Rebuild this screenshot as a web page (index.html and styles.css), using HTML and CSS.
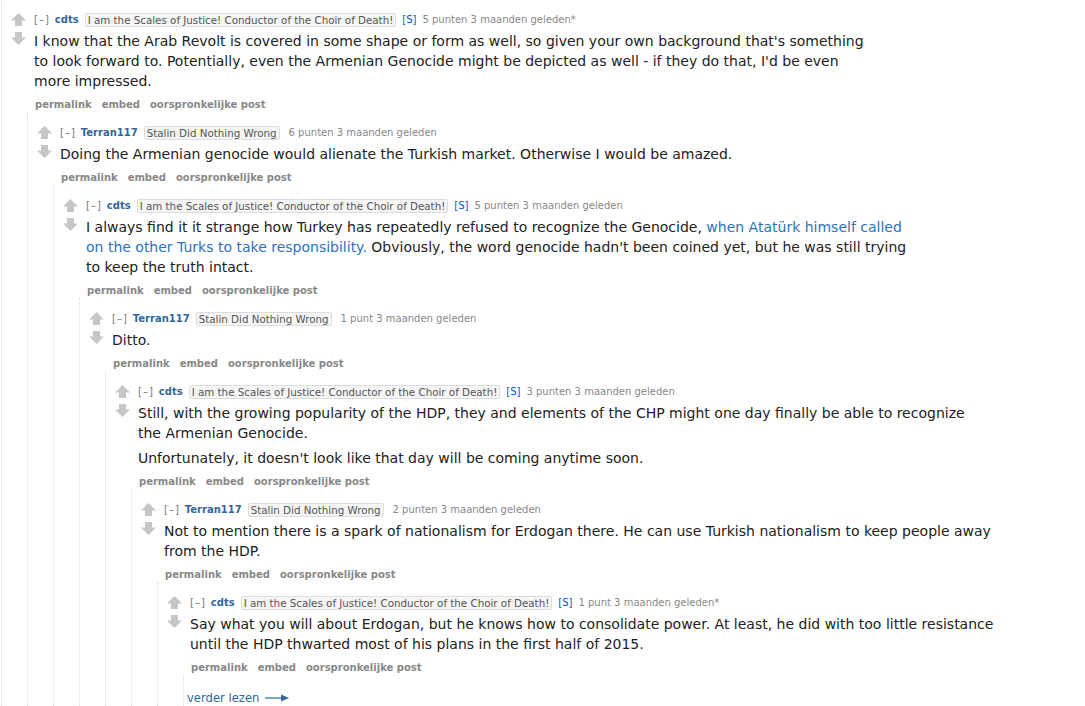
FILE: index.html
```html
<!DOCTYPE html>
<html lang="nl">
<head>
<meta charset="utf-8">
<title>Reacties</title>
<link rel="stylesheet" href="styles.css">
</head>
<body>
<div class="thread">
  <div class="comment">
    <div class="midcol">
      <svg class="arrow" viewBox="0 0 15 14"><path d="M7.5 0 L15 7.5 L11 7.5 L11 13 L4 13 L4 7.5 L0 7.5 Z"/></svg>
      <svg class="arrow" viewBox="0 0 15 14"><path d="M7.5 14 L15 6.5 L11 6.5 L11 1 L4 1 L4 6.5 L0 6.5 Z"/></svg>
    </div>
    <div class="entry">
      <p class="tagline"><span class="expand">[–]</span><span class="author">cdts</span><span class="flair">I am the Scales of Justice! Conductor of the Choir of Death!</span><span class="submitter">[S]</span><span class="meta">5 punten 3 maanden geleden*</span></p>
      <div class="md"><p>I know that the Arab Revolt is covered in some shape or form as well, so given your own background that's something to look forward to. Potentially, even the Armenian Genocide might be depicted as well - if they do that, I'd be even more impressed.</p></div>
      <ul class="flat-list"><li>permalink</li><li>embed</li><li>oorspronkelijke post</li></ul>

      <div class="child">
        <div class="comment">
          <div class="midcol">
            <svg class="arrow" viewBox="0 0 15 14"><path d="M7.5 0 L15 7.5 L11 7.5 L11 13 L4 13 L4 7.5 L0 7.5 Z"/></svg>
            <svg class="arrow" viewBox="0 0 15 14"><path d="M7.5 14 L15 6.5 L11 6.5 L11 1 L4 1 L4 6.5 L0 6.5 Z"/></svg>
          </div>
          <div class="entry">
            <p class="tagline"><span class="expand">[–]</span><span class="author">Terran117</span><span class="flair">Stalin Did Nothing Wrong</span><span class="meta wide">6 punten 3 maanden geleden</span></p>
            <div class="md"><p>Doing the Armenian genocide would alienate the Turkish market. Otherwise I would be amazed.</p></div>
            <ul class="flat-list"><li>permalink</li><li>embed</li><li>oorspronkelijke post</li></ul>

            <div class="child">
              <div class="comment">
                <div class="midcol">
                  <svg class="arrow" viewBox="0 0 15 14"><path d="M7.5 0 L15 7.5 L11 7.5 L11 13 L4 13 L4 7.5 L0 7.5 Z"/></svg>
                  <svg class="arrow" viewBox="0 0 15 14"><path d="M7.5 14 L15 6.5 L11 6.5 L11 1 L4 1 L4 6.5 L0 6.5 Z"/></svg>
                </div>
                <div class="entry">
                  <p class="tagline"><span class="expand">[–]</span><span class="author">cdts</span><span class="flair">I am the Scales of Justice! Conductor of the Choir of Death!</span><span class="submitter">[S]</span><span class="meta">5 punten 3 maanden geleden</span></p>
                  <div class="md"><p>I always find it it strange how Turkey has repeatedly refused to recognize the Genocide, <a href="#">when Atatürk himself called on the other Turks to take responsibility.</a> Obviously, the word genocide hadn't been coined yet, but he was still trying to keep the truth intact.</p></div>
                  <ul class="flat-list"><li>permalink</li><li>embed</li><li>oorspronkelijke post</li></ul>

                  <div class="child">
                    <div class="comment">
                      <div class="midcol">
                        <svg class="arrow" viewBox="0 0 15 14"><path d="M7.5 0 L15 7.5 L11 7.5 L11 13 L4 13 L4 7.5 L0 7.5 Z"/></svg>
                        <svg class="arrow" viewBox="0 0 15 14"><path d="M7.5 14 L15 6.5 L11 6.5 L11 1 L4 1 L4 6.5 L0 6.5 Z"/></svg>
                      </div>
                      <div class="entry">
                        <p class="tagline"><span class="expand">[–]</span><span class="author">Terran117</span><span class="flair">Stalin Did Nothing Wrong</span><span class="meta wide">1 punt 3 maanden geleden</span></p>
                        <div class="md"><p>Ditto.</p></div>
                        <ul class="flat-list"><li>permalink</li><li>embed</li><li>oorspronkelijke post</li></ul>

                        <div class="child">
                          <div class="comment">
                            <div class="midcol">
                              <svg class="arrow" viewBox="0 0 15 14"><path d="M7.5 0 L15 7.5 L11 7.5 L11 13 L4 13 L4 7.5 L0 7.5 Z"/></svg>
                              <svg class="arrow" viewBox="0 0 15 14"><path d="M7.5 14 L15 6.5 L11 6.5 L11 1 L4 1 L4 6.5 L0 6.5 Z"/></svg>
                            </div>
                            <div class="entry">
                              <p class="tagline"><span class="expand">[–]</span><span class="author">cdts</span><span class="flair">I am the Scales of Justice! Conductor of the Choir of Death!</span><span class="submitter">[S]</span><span class="meta">3 punten 3 maanden geleden</span></p>
                              <div class="md"><p>Still, with the growing popularity of the HDP, they and elements of the CHP might one day finally be able to recognize the Armenian Genocide.</p><p>Unfortunately, it doesn't look like that day will be coming anytime soon.</p></div>
                              <ul class="flat-list"><li>permalink</li><li>embed</li><li>oorspronkelijke post</li></ul>

                              <div class="child">
                                <div class="comment">
                                  <div class="midcol">
                                    <svg class="arrow" viewBox="0 0 15 14"><path d="M7.5 0 L15 7.5 L11 7.5 L11 13 L4 13 L4 7.5 L0 7.5 Z"/></svg>
                                    <svg class="arrow" viewBox="0 0 15 14"><path d="M7.5 14 L15 6.5 L11 6.5 L11 1 L4 1 L4 6.5 L0 6.5 Z"/></svg>
                                  </div>
                                  <div class="entry">
                                    <p class="tagline"><span class="expand">[–]</span><span class="author">Terran117</span><span class="flair">Stalin Did Nothing Wrong</span><span class="meta wide">2 punten 3 maanden geleden</span></p>
                                    <div class="md"><p>Not to mention there is a spark of nationalism for Erdogan there. He can use Turkish nationalism to keep people away from the HDP.</p></div>
                                    <ul class="flat-list"><li>permalink</li><li>embed</li><li>oorspronkelijke post</li></ul>

                                    <div class="child">
                                      <div class="comment">
                                        <div class="midcol">
                                          <svg class="arrow" viewBox="0 0 15 14"><path d="M7.5 0 L15 7.5 L11 7.5 L11 13 L4 13 L4 7.5 L0 7.5 Z"/></svg>
                                          <svg class="arrow" viewBox="0 0 15 14"><path d="M7.5 14 L15 6.5 L11 6.5 L11 1 L4 1 L4 6.5 L0 6.5 Z"/></svg>
                                        </div>
                                        <div class="entry">
                                          <p class="tagline"><span class="expand">[–]</span><span class="author">cdts</span><span class="flair">I am the Scales of Justice! Conductor of the Choir of Death!</span><span class="submitter">[S]</span><span class="meta">1 punt 3 maanden geleden*</span></p>
                                          <div class="md"><p>Say what you will about Erdogan, but he knows how to consolidate power. At least, he did with too little resistance until the HDP thwarted most of his plans in the first half of 2015.</p></div>
                                          <ul class="flat-list"><li>permalink</li><li>embed</li><li>oorspronkelijke post</li></ul>

                                          <div class="child">
                                            <div class="more">verder lezen <svg class="more-arrow" viewBox="0 0 24 8"><path d="M0 4 H17" stroke="currentColor" stroke-width="1.2"/><path d="M16 0.5 L24 4 L16 7.5 Z" fill="currentColor"/></svg></div>
                                          </div>
                                        </div>
                                      </div>
                                    </div>
                                  </div>
                                </div>
                              </div>
                            </div>
                          </div>
                        </div>
                      </div>
                    </div>
                  </div>
                </div>
              </div>
            </div>
          </div>
        </div>
      </div>
    </div>
  </div>
</div>
</body>
</html>
```

FILE: styles.css
```css
html, body {
  margin: 0;
  padding: 0;
  background: #fff;
}

body {
  font-family: "DejaVu Sans", Verdana, sans-serif;
  color: #222;
  overflow: hidden;
}

.thread {
  margin-left: 1px;
  padding-top: 13px;
  border-left: 1px dotted #ddd;
}

.comment {
  display: flex;
  padding-left: 9px;
}

.midcol {
  width: 15px;
  flex: none;
  margin-right: 8px;
  display: flex;
  flex-direction: column;
  gap: 4px;
}

.arrow {
  width: 15px;
  height: 14px;
  display: block;
  fill: #c6c6c6;
}

.entry {
  flex: 1;
  min-width: 0;
}

.tagline {
  margin: 0;
  display: flex;
  align-items: center;
  gap: 6px;
  font-size: 10px;
  line-height: 14px;
  color: #888;
  white-space: nowrap;
}

.expand {
  color: #777;
  letter-spacing: 1px;
  margin-right: -1px;
}

.author {
  color: #369;
  font-weight: bold;
}

.flair {
  font-size: 10.3px;
  line-height: 12px;
  padding: 0 2px;
  background: #f5f5f5;
  border: 1px solid #ddd;
  border-radius: 2px;
  color: #545454;
}

.submitter {
  color: #0055df;
}

.meta.wide {
  margin-left: 3px;
}

.md {
  margin-top: 4px;
  max-width: 832px;
  font-size: 14px;
  line-height: 20px;
  color: #222;
}

.md p {
  margin: 0;
}

.md p + p {
  margin-top: 5px;
}

.md a {
  color: #2f72b8;
  text-decoration: none;
}

.flat-list {
  list-style: none;
  margin: 7px 0 0 1px;
  padding: 0;
  display: flex;
  gap: 10px;
  font-size: 10px;
  line-height: 14px;
  font-weight: bold;
  color: #888;
}

.child {
  margin-left: -7px;
  padding-top: 14px;
  border-left: 1px dotted #ddd;
}

.more {
  padding: 1px 0 0 3px;
  font-size: 11.6px;
  line-height: 16px;
  color: #369;
  display: flex;
  align-items: center;
  gap: 6px;
}

.more-arrow {
  width: 24px;
  height: 8px;
  display: block;
}
```
